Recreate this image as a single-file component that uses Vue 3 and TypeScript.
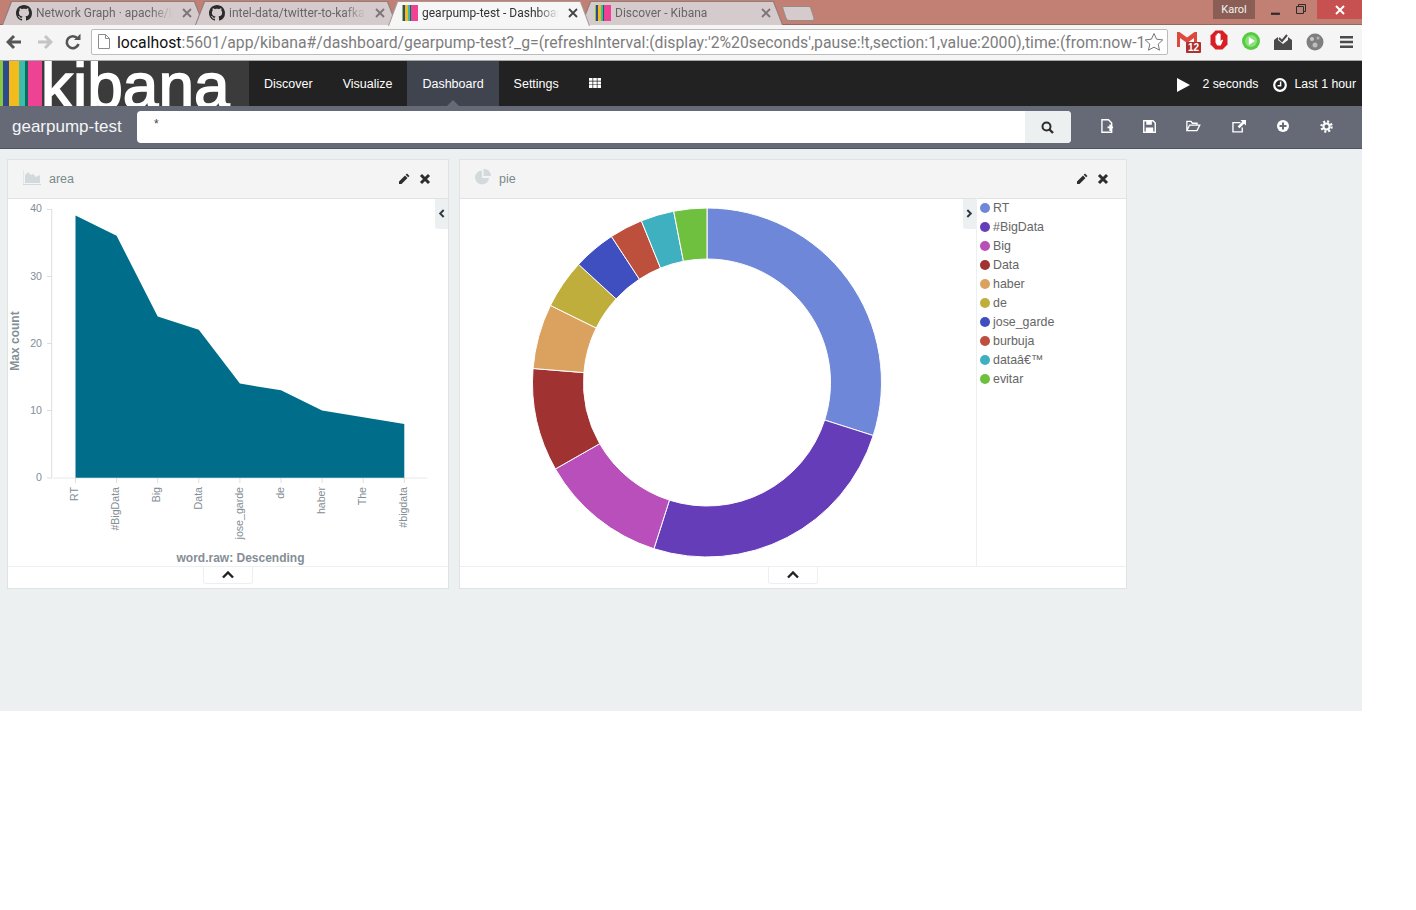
<script setup lang="ts">
interface Tab { title: string; icon: "github" | "kibana"; active?: boolean }
interface Slice { label: string; color: string; end: number }

const tabs: Tab[] = [
  { title: "Network Graph · apache/incubator", icon: "github" },
  { title: "intel-data/twitter-to-kafka", icon: "github" },
  { title: "gearpump-test - Dashboard", icon: "kibana", active: true },
  { title: "Discover - Kibana", icon: "kibana" },
];

const octocat =
  "M8 0C3.58 0 0 3.58 0 8c0 3.54 2.29 6.53 5.47 7.59.4.07.55-.17.55-.38 0-.19-.01-.82-.01-1.49-2.01.37-2.53-.49-2.69-.94-.09-.23-.48-.94-.82-1.13-.28-.15-.68-.52-.01-.53.63-.01 1.08.58 1.23.82.72 1.21 1.87.87 2.33.66.07-.52.28-.87.51-1.07-1.78-.2-3.64-.89-3.64-3.95 0-.87.31-1.59.82-2.15-.08-.2-.36-1.02.08-2.12 0 0 .67-.21 2.2.82.64-.18 1.32-.27 2-.27.68 0 1.36.09 2 .27 1.53-1.04 2.2-.82 2.2-.82.44 1.1.16 1.92.08 2.12.51.56.82 1.27.82 2.15 0 3.07-1.87 3.75-3.65 3.95.29.25.54.73.54 1.48 0 1.07-.01 1.93-.01 2.2 0 .21.15.46.55.38A8.013 8.013 0 0016 8c0-4.42-3.58-8-8-8z";

const navItems = [
  { label: "Discover" },
  { label: "Visualize" },
  { label: "Dashboard", active: true },
  { label: "Settings" },
];

// area chart, in page coordinates
const baseY = 477.7;
const unit = 6.72;
const yFor = (v: number) => baseY - v * unit;
const yTicks = [0, 10, 20, 30, 40];
const words = [
  { word: "RT", value: 39 },
  { word: "#BigData", value: 36 },
  { word: "Big", value: 24 },
  { word: "Data", value: 22 },
  { word: "jose_garde", value: 14 },
  { word: "de", value: 13 },
  { word: "haber", value: 10 },
  { word: "The", value: 9 },
  { word: "#bigdata", value: 8 },
];
const xFor = (i: number) => 75.5 + i * 41.1;
const areaPoints = [
  `${xFor(0)},${baseY}`,
  ...words.map((w, i) => `${xFor(i)},${yFor(w.value)}`),
  `${xFor(8)},${baseY}`,
].join(" ");

// donut, end angles in degrees clockwise from the top
const slices: Slice[] = [
  { label: "RT", color: "#6f87d8", end: 107.7 },
  { label: "#BigData", color: "#663db8", end: 197.7 },
  { label: "Big", color: "#b94fbb", end: 240.3 },
  { label: "Data", color: "#a13232", end: 274.6 },
  { label: "haber", color: "#dba25f", end: 296.2 },
  { label: "de", color: "#bfae3b", end: 312.6 },
  { label: "jose_garde", color: "#3f4fc0", end: 326.8 },
  { label: "burbuja", color: "#bd4f3d", end: 337.9 },
  { label: "dataâ€™", color: "#3fb0c0", end: 349 },
  { label: "evitar", color: "#70c040", end: 360 },
];

const cx = 707;
const cy = 382.5;
const polar = (r: number, deg: number) => {
  const a = (deg * Math.PI) / 180;
  return `${(cx + r * Math.sin(a)).toFixed(2)} ${(cy - r * Math.cos(a)).toFixed(2)}`;
};
const slicePath = (start: number, end: number) => {
  const large = end - start > 180 ? 1 : 0;
  return `M${polar(174.5, start)}A174.5 174.5 0 ${large} 1 ${polar(174.5, end)}L${polar(123.5, end)}A123.5 123.5 0 ${large} 0 ${polar(123.5, start)}Z`;
};
const arcs = slices.map((s, i) => ({
  color: s.color,
  d: slicePath(i === 0 ? 0 : slices[i - 1].end, s.end),
}));
</script>

<template>
  <div class="screen">
    <div class="tabstrip">
      <div v-for="tab in tabs" :key="tab.title" class="tab" :class="{ 'tab--active': tab.active }">
        <svg v-if="tab.icon === 'github'" class="favicon" viewBox="0 0 16 16"><path :d="octocat" fill="#2b2b2b" /></svg>
        <svg v-else class="favicon" viewBox="0 0 16 16">
          <rect x="0" width="1" height="16" fill="#8cc63f" />
          <rect x="1" width="2" height="16" fill="#2e4a8f" />
          <rect x="3" width="3" height="16" fill="#f4bb1c" />
          <rect x="6" width="2" height="16" fill="#3cbcab" />
          <rect x="8" width="1" height="16" fill="#0a6b5f" />
          <rect x="9" width="7" height="16" fill="#ee4394" />
        </svg>
        <span class="tab-title">{{ tab.title }}</span>
        <svg class="tab-close" viewBox="0 0 10 10"><path d="M1 1l8 8M9 1l-8 8" /></svg>
      </div>
      <div class="newtab"></div>
      <div class="window-user">Karol</div>
      <svg class="win-icon win-min" viewBox="0 0 9 9"><rect y="6" width="8" height="2" fill="#2c2c2c" /></svg>
      <svg class="win-icon win-max" viewBox="0 0 10 10"><path d="M2.5 2.5v-2h7v7h-2M.5 2.5h7v7h-7z" fill="none" stroke="#2c2c2c" /></svg>
      <div class="win-close">
        <svg viewBox="0 0 10 10" width="10" height="10"><path d="M1 1l8 8M9 1l-8 8" stroke="#fff" stroke-width="2" /></svg>
      </div>
    </div>

    <div class="toolbar">
      <svg class="tool" viewBox="0 0 18 18">
        <path d="M2 9h13M8 3L2 9l6 6" fill="none" stroke="#555" stroke-width="3" />
      </svg>
      <svg class="tool" viewBox="0 0 18 18">
        <path d="M16 9H3M10 3l6 6-6 6" fill="none" stroke="#c4c4c4" stroke-width="3" />
      </svg>
      <svg class="tool" viewBox="0 0 18 18">
        <path d="M14.5 11a6 6 0 1 1-1-5.5" fill="none" stroke="#555" stroke-width="2.6" />
        <path d="M10 7h6.5V.8z" fill="#555" />
      </svg>
      <div class="omnibox">
        <svg class="doc-icon" viewBox="0 0 12 15">
          <path d="M.5.5h7l4 4v10H.5z" fill="#fff" stroke="#8c8c8c" />
          <path d="M7.5.5v4h4" fill="none" stroke="#8c8c8c" />
        </svg>
        <div class="url"><span class="url-host">localhost</span>:5601/app/kibana#/dashboard/gearpump-test?_g=(refreshInterval:(display:'2%20seconds',pause:!t,section:1,value:2000),time:(from:now-1h,mode:quick,to:now))</div>
        <svg class="star" viewBox="0 0 20 20">
          <path d="M10 1.5l2.6 5.7 6.2.7-4.6 4.2 1.3 6.1L10 15.1l-5.5 3.1 1.3-6.1L1.2 7.9l6.2-.7z" fill="#fff" stroke="#777" />
        </svg>
      </div>
      <div class="extensions">
        <div class="gmail">
          <svg viewBox="0 0 20 16" width="20" height="16">
            <path d="M0 0h2.500L10 5.500 17.500 0H20v15H17V6l-7 5L3 6v9H0z" fill="#dc4a3e" />
          </svg>
          <span class="gmail-count">12</span>
        </div>
        <svg class="ext ext-adblock" viewBox="0 0 18 20">
          <path d="M5.500 .5h7L17.500 5.500v9l-5 5h-7l-5-5v-9z" fill="#d81f26" />
          <path d="M5.500 9V5.500h1.200V9 3.800h1.300V9 3h1.300v6V3.800h1.300V11l1.600-1.500.9.700L10.800 15.500H7.200L5.500 12.500z" fill="#fff" />
        </svg>
        <svg class="ext ext-play" viewBox="0 0 18 18">
          <circle cx="9" cy="9" r="9" fill="#56cb3f" />
          <circle cx="9" cy="9" r="6" fill="#8be07a" />
          <path d="M6.800 5l6.200 4-6.200 4z" fill="#fff" />
        </svg>
        <svg class="ext ext-mail" viewBox="0 0 18 16">
          <path d="M0 6l4-3v3l5 4 5-4V3l4 3v10H0z" fill="#4a4a4a" />
          <path d="M5 4l3 3 5-6" fill="none" stroke="#4a4a4a" stroke-width="2" />
        </svg>
        <svg class="ext ext-globe" viewBox="0 0 18 18">
          <circle cx="9" cy="9" r="8.500" fill="#7f7f7f" />
          <circle cx="6" cy="6" r="2" fill="#c9c9c9" />
          <circle cx="12" cy="5" r="1.500" fill="#b5b5b5" />
          <circle cx="9" cy="12" r="2.500" fill="#bdbdbd" />
        </svg>
        <svg class="ext ext-menu" viewBox="0 0 13 12">
          <path d="M0 0h13v2.500H0zM0 4.700h13v2.500H0zM0 9.500h13V12H0z" fill="#4a4a4a" />
        </svg>
      </div>
    </div>

    <nav class="topnav">
      <div class="logo">
        <div class="logo-stripes">
          <span class="stripe s1"></span><span class="stripe s2"></span><span class="stripe s3"></span>
          <span class="stripe s4"></span><span class="stripe s5"></span><span class="stripe s6"></span>
        </div>
        <span class="logo-text">kibana</span>
      </div>
      <a v-for="item in navItems" :key="item.label" class="nav-link" :class="{ 'nav-link--active': item.active }">{{ item.label }}</a>
      <svg class="grid-icon" viewBox="0 0 12 10">
        <path d="M0 0h3.500v2.800H0zM4.200 0h3.600v2.800H4.200zM8.500 0H12v2.800H8.500zM0 3.500h3.500v2.900H0zM4.200 3.500h3.600v2.900H4.200zM8.500 3.500H12v2.900H8.500zM0 7.100h3.500V10H0zM4.200 7.100h3.600V10H4.200zM8.500 7.100H12V10H8.500z" fill="#fff" />
      </svg>
      <div class="nav-right">
        <svg class="play-icon" viewBox="0 0 13 14"><path d="M0 0l13 7-13 7z" fill="#fff" /></svg>
        <span class="nav-text">2 seconds</span>
        <svg class="clock-icon" viewBox="0 0 14 14">
          <circle cx="7" cy="7" r="5.800" fill="none" stroke="#fff" stroke-width="2.200" />
          <path d="M7.600 3.500v4.200H4.500" fill="none" stroke="#fff" stroke-width="1.500" />
        </svg>
        <span class="nav-text">Last 1 hour</span>
      </div>
    </nav>

    <div class="subnav">
      <div class="dash-name">gearpump-test</div>
      <div class="query">
        <div class="query-input">*</div>
        <div class="query-btn">
          <svg viewBox="0 0 13 13" width="13" height="13">
            <circle cx="5.500" cy="5.500" r="4" fill="none" stroke="#2d2d2d" stroke-width="2" />
            <path d="M8.500 8.500l3.500 3.500" stroke="#2d2d2d" stroke-width="2.400" />
          </svg>
        </div>
      </div>
      <div class="sub-actions">
        <span class="sub-action">
          <svg viewBox="0 0 14 15" width="13" height="14">
            <path d="M1 .8h7l3.500 3.500v9.900H1z" fill="none" stroke="#fff" stroke-width="1.500" />
            <path d="M7 8h2V6h2v2h2v2h-2v3H9v-3H7z" fill="#fff" />
          </svg>
        </span>
        <span class="sub-action">
          <svg viewBox="0 0 14 14" width="13" height="13">
            <path d="M.8.800h10l2.400 2.400v10H.8z" fill="none" stroke="#fff" stroke-width="1.500" />
            <path d="M3.500 1h6v4h-6zM3 8h8v5H3z" fill="#fff" />
          </svg>
        </span>
        <span class="sub-action">
          <svg viewBox="0 0 16 13" width="15" height="12">
            <path d="M.8 11.500V1.500h4.500l1.500 2h5v2.300M.8 11.500l3-6h11l-3 6z" fill="none" stroke="#fff" stroke-width="1.400" />
          </svg>
        </span>
        <span class="sub-action">
          <svg viewBox="0 0 15 14" width="14" height="13">
            <path d="M9 2.800H1v10h10V8" fill="none" stroke="#fff" stroke-width="1.500" />
            <path d="M9 0h6v6l-2-2-5 5-2-2 5-5z" fill="#fff" />
          </svg>
        </span>
        <span class="sub-action">
          <svg viewBox="0 0 12 12" width="12" height="12">
            <circle cx="6" cy="6" r="6" fill="#fff" />
            <path d="M5 2.500h2V5h2.500v2H7v2.500H5V7H2.500V5H5z" fill="#656a76" />
          </svg>
        </span>
        <span class="sub-action">
          <svg viewBox="0 0 14 14" width="13" height="13">
            <circle cx="7" cy="7" r="5.500" fill="none" stroke="#fff" stroke-width="2.400" stroke-dasharray="2.200 2.120" />
            <circle cx="7" cy="7" r="3.300" fill="none" stroke="#fff" stroke-width="2.200" />
          </svg>
        </span>
      </div>
    </div>

    <main class="dashboard">
      <section class="panel panel--area">
        <header class="panel-head">
          <svg class="panel-icon" viewBox="0 0 18 15">
            <path d="M0 0v14.500h18" fill="none" stroke="#d3dadb" />
            <path d="M2 13V5l3-3 3 3 2-1 3 3 4-2v8z" fill="#d3dadb" />
          </svg>
          <span class="panel-title">area</span>
          <svg class="head-action" viewBox="0 0 12 12"><path d="M9 .5L11.500 3 10.200 4.300 7.700 1.800zM7 2.500L9.500 5 3.500 11H1V8.500z" fill="#2d2d2d" /></svg>
          <svg class="head-action" viewBox="0 0 12 12"><path d="M2 2l8 8M10 2l-8 8" stroke="#2d2d2d" stroke-width="3" /></svg>
        </header>
        <div class="panel-body">
          <svg class="area-chart" viewBox="8 199 440 367" width="440" height="367">
            <path d="M51.700 209.500V478M47 209.500h5M47 276.500h5M47 343.500h5M47 410.500h5M47 478h5" fill="none" stroke="#dedede" />
            <path d="M53 478h374" stroke="#e8e8e8" />
            <polygon :points="areaPoints" fill="#006e8a" />
            <path v-for="(w, i) in words" :key="w.word" :d="`M${xFor(i)} 478v5`" stroke="#dedede" />
            <text v-for="t in yTicks" :key="t" class="tick" x="42" :y="yFor(t) + 3.500" text-anchor="end">{{ t }}</text>
            <text
              v-for="(w, i) in words"
              :key="w.word"
              class="tick"
              text-anchor="end"
              :transform="`translate(${xFor(i) + 2.700} 487) rotate(-90)`"
            >{{ w.word }}</text>
            <text class="axis-title" text-anchor="middle" transform="translate(19 341) rotate(-90)">Max count</text>
            <text class="axis-title" x="240.500" y="562" text-anchor="middle">word.raw: Descending</text>
          </svg>
          <div class="legend-toggle legend-toggle--area">
            <svg viewBox="0 0 8 10" width="7" height="9"><path d="M6.500 1L2.500 5l4 4" fill="none" stroke="#2d3a45" stroke-width="2.200" /></svg>
          </div>
        </div>
        <footer class="panel-foot">
          <div class="spy-toggle"><svg viewBox="0 0 12 8" width="12" height="8"><path d="M1 6.500l5-5 5 5" fill="none" stroke="#222" stroke-width="2.400" /></svg></div>
        </footer>
      </section>

      <section class="panel panel--pie">
        <header class="panel-head">
          <svg class="panel-icon panel-icon--pie" viewBox="0 0 16 16">
            <path d="M7 1.500A7 7 0 1 0 14 9H7z" fill="#d3dadb" />
            <path d="M8.500 0A7 7 0 0 1 16 7H8.500z" fill="#d3dadb" />
          </svg>
          <span class="panel-title">pie</span>
          <svg class="head-action" viewBox="0 0 12 12"><path d="M9 .5L11.500 3 10.200 4.300 7.700 1.800zM7 2.500L9.500 5 3.500 11H1V8.500z" fill="#2d2d2d" /></svg>
          <svg class="head-action" viewBox="0 0 12 12"><path d="M2 2l8 8M10 2l-8 8" stroke="#2d2d2d" stroke-width="3" /></svg>
        </header>
        <div class="panel-body">
          <svg class="pie-chart" viewBox="460 199 516 367" width="516" height="367">
            <path v-for="arc in arcs" :key="arc.color" :d="arc.d" :fill="arc.color" stroke="#fff" stroke-width="1" />
          </svg>
          <div class="legend-toggle legend-toggle--pie">
            <svg viewBox="0 0 8 10" width="7" height="9"><path d="M1.500 1l4 4-4 4" fill="none" stroke="#2d3a45" stroke-width="2.200" /></svg>
          </div>
          <ul class="legend">
            <li v-for="s in slices" :key="s.label" class="legend-item">
              <span class="legend-dot" :style="{ background: s.color }"></span>{{ s.label }}
            </li>
          </ul>
        </div>
        <footer class="panel-foot">
          <div class="spy-toggle"><svg viewBox="0 0 12 8" width="12" height="8"><path d="M1 6.500l5-5 5 5" fill="none" stroke="#222" stroke-width="2.400" /></svg></div>
        </footer>
      </section>
    </main>
  </div>
</template>

<style scoped>
.screen {
  width: 1362px;
  font-family: "Liberation Sans", Arial, sans-serif;
}

/* browser chrome */
.tabstrip {
  height: 25px;
  display: flex;
  background: #c27f73;
  box-shadow: inset 0 -1px 0 #8e6a62;
  padding-left: 2px;
  font-family: Roboto, "Noto Sans", sans-serif;
}

.tab {
  position: relative;
  width: 202px;
  height: 24px;
  margin: 1px -9px 0 0;
  padding: 0 12px 0 14px;
  box-sizing: border-box;
  display: flex;
  align-items: center;
  background: #8f7e7b;
  clip-path: polygon(0 100%, 9px 0, calc(100% - 9px) 0, 100% 100%);
}

.tab::before {
  content: "";
  position: absolute;
  inset: 1px 1px 0 1px;
  background: #d5cbcc;
  clip-path: polygon(0 100%, 9px 0, calc(100% - 9px) 0, 100% 100%);
}

.tab > * {
  position: relative;
}

.tab--active {
  z-index: 1;
  height: 25px;
  padding-bottom: 1px;
  background: #a59a98;
}

.tab--active::before {
  background: #f6f6f6;
}

.favicon {
  width: 16px;
  height: 16px;
  flex: none;
}

.tab-title {
  margin-left: 4px;
  width: 144px;
  flex: none;
  overflow: hidden;
  white-space: nowrap;
  font-size: 12px;
  color: #666;
  -webkit-mask-image: linear-gradient(to right, #000 115px, transparent 137px);
  mask-image: linear-gradient(to right, #000 115px, transparent 137px);
}

.tab--active .tab-title {
  color: #333;
}

.tab-close {
  width: 10px;
  height: 10px;
  margin-left: 2px;
  flex: none;
  stroke: #7b7577;
  stroke-width: 1.8;
  fill: none;
}

.tab--active .tab-close {
  stroke: #444;
}

.newtab {
  width: 27px;
  height: 13px;
  margin: 6px 0 0 10px;
  background: #d5cbcc;
  border: 1px solid #9a8a87;
  border-radius: 2px 2px 3px 3px;
  transform: skewX(18deg);
}

.window-user {
  margin-left: 400px;
  width: 43px;
  height: 19px;
  background: #8b5e55;
  color: #f2f2f2;
  font-size: 11px;
  line-height: 19px;
  text-align: center;
}

.win-icon {
  width: 10px;
  height: 10px;
  flex: none;
}

.win-min {
  margin: 6px 0 0 16px;
}

.win-max {
  margin: 4px 0 0 15px;
}

.win-close {
  margin-left: 11px;
  width: 45px;
  height: 19px;
  background: #c75050;
  display: flex;
  align-items: center;
  justify-content: center;
}

.toolbar {
  height: 36px;
  box-sizing: border-box;
  display: flex;
  align-items: center;
  gap: 11px;
  padding: 0 0 2px 6px;
  background: #f5f5f5;
  border-bottom: 1px solid #a8a8a8;
}

.tool {
  width: 18px;
  height: 18px;
  flex: none;
}

.omnibox {
  width: 1077px;
  height: 26px;
  margin-left: -2px;
  box-sizing: border-box;
  flex: none;
  display: flex;
  align-items: center;
  background: #fff;
  border: 1px solid #bcbcbc;
  border-radius: 2px;
  padding: 0 3px 0 6px;
}

.doc-icon {
  width: 12px;
  height: 15px;
  flex: none;
}

.url {
  margin: 0 1px 0 7px;
  padding-top: 2px;
  flex: 1;
  min-width: 0;
  overflow: hidden;
  white-space: nowrap;
  font-family: Roboto, "Noto Sans", sans-serif;
  font-size: 15.77px;
  color: #7d7d7d;
}

.url-host {
  color: #111;
}

.star {
  width: 20px;
  height: 20px;
  flex: none;
}

.extensions {
  display: flex;
  align-items: center;
  margin-left: -3px;
}

.gmail {
  position: relative;
  width: 24px;
  height: 22px;
  margin-left: 1px;
  padding-top: 1px;
  box-sizing: border-box;
}

.gmail-count {
  position: absolute;
  right: 0;
  bottom: 0;
  padding: 0 2px;
  background: #b03030;
  border-radius: 1px;
  color: #fff;
  font-size: 10px;
  font-weight: 700;
  line-height: 11px;
}

.ext {
  flex: none;
}

.ext-adblock {
  width: 18px;
  height: 20px;
  margin: 0 0 3px 9px;
}

.ext-play {
  width: 18px;
  height: 18px;
  margin: 0 0 2px 14px;
}

.ext-mail {
  width: 18px;
  height: 16px;
  margin-left: 14px;
}

.ext-globe {
  width: 18px;
  height: 18px;
  margin-left: 14px;
}

.ext-menu {
  width: 13px;
  height: 12px;
  margin-left: 16px;
}

/* kibana nav */
.topnav {
  position: relative;
  height: 45px;
  display: flex;
  align-items: center;
  background: #222;
  color: #fff;
}

.logo {
  width: 249px;
  height: 45px;
  flex: none;
  display: flex;
  background: #3b3b3b;
  overflow: hidden;
}

.logo-stripes {
  display: flex;
  flex: none;
  width: 42px;
}

.stripe {
  height: 100%;
}

.s1 { width: 3px; background: #8cc63f; }
.s2 { width: 6px; background: #2e4a8f; }
.s3 { width: 10px; background: #f4bb1c; }
.s4 { width: 6px; background: #3cbcab; }
.s5 { width: 3px; background: #0a6b5f; }
.s6 { width: 14px; background: #ee4394; }

.logo-text {
  margin-left: -1px;
  font-size: 64px;
  line-height: 45px;
  -webkit-text-stroke: 1.6px #fff;
  color: #fff;
  transform: translateY(3px);
}

.nav-link {
  position: relative;
  height: 45px;
  padding: 0 15px;
  display: flex;
  align-items: center;
  font-size: 12.5px;
  color: #fff;
}

.nav-link--active {
  background: #3f444f;
}

.nav-link--active::after {
  content: "";
  position: absolute;
  left: 50%;
  bottom: 0;
  margin-left: -6px;
  border: 6px solid transparent;
  border-top: 0;
  border-bottom-color: #656a76;
}

.grid-icon {
  width: 12px;
  height: 10px;
  margin-left: 15px;
  margin-top: -1px;
  flex: none;
}

.nav-right {
  margin-left: auto;
  padding-right: 6px;
  display: flex;
  align-items: center;
}

.nav-text {
  font-size: 12.3px;
}

.play-icon {
  width: 13px;
  height: 14px;
  margin: 3px 12px 0 0;
}

.clock-icon {
  width: 14px;
  height: 14px;
  margin: 2px 7px 0 15px;
}

.subnav {
  height: 43px;
  box-sizing: border-box;
  display: flex;
  align-items: flex-start;
  padding: 5px 0 0 12px;
  background: #656a76;
  border-bottom: 1px solid #4e525c;
}

.dash-name {
  width: 125px;
  flex: none;
  font-size: 17px;
  line-height: 31px;
  color: #f4f5f6;
}

.query {
  width: 934px;
  height: 32px;
  flex: none;
  display: flex;
  border-radius: 4px;
  overflow: hidden;
  background: #fff;
}

.query-input {
  flex: 1;
  padding: 6px 0 0 17px;
  font-size: 12px;
  color: #444;
}

.query-btn {
  width: 46px;
  padding-right: 2px;
  box-sizing: border-box;
  background: #ecf0f1;
  display: flex;
  align-items: center;
  justify-content: center;
}

.sub-actions {
  display: flex;
  margin-left: 15px;
}

.sub-action {
  width: 43.8px;
  height: 30px;
  display: flex;
  align-items: center;
  justify-content: center;
}

.sub-action:nth-child(2) {
  margin-left: -2px;
}

.sub-action:nth-child(4) {
  margin-left: 2px;
}

/* dashboard */
.dashboard {
  height: 562px;
  box-sizing: border-box;
  display: flex;
  align-items: flex-start;
  gap: 10px;
  padding: 10px 0 0 7px;
  background: #ecf0f1;
}

.panel {
  height: 430px;
  box-sizing: border-box;
  display: flex;
  flex-direction: column;
  background: #fff;
  border: 1px solid #dfe3e4;
}

.panel--area {
  width: 442px;
}

.panel--pie {
  width: 668px;
}

.panel-head {
  height: 39px;
  box-sizing: border-box;
  flex: none;
  display: flex;
  align-items: center;
  padding: 0 17px 0 15px;
  background: #f4f4f4;
  border-bottom: 1px solid #e0e3e4;
}

.panel-icon {
  width: 18px;
  height: 15px;
  flex: none;
  margin-top: -4px;
}

.panel-icon--pie {
  width: 16px;
  height: 16px;
}

.panel-title {
  margin-left: 8px;
  flex: 1;
  font-size: 12.5px;
  color: #7b8a8b;
}

.head-action {
  width: 12px;
  height: 12px;
  margin-left: 9px;
  flex: none;
}

.panel-body {
  position: relative;
  height: 367px;
  flex: none;
  display: flex;
}

.area-chart,
.pie-chart {
  display: block;
  flex: none;
}

.tick {
  font-size: 10.6px;
  fill: #848e96;
}

.axis-title {
  font-size: 12px;
  font-weight: 700;
  fill: #848e96;
}

.legend-toggle {
  position: absolute;
  top: 0;
  width: 13px;
  height: 30px;
  background: #ecf0f1;
  display: flex;
  align-items: center;
  justify-content: center;
  padding-bottom: 2px;
  box-sizing: border-box;
  border-radius: 0 0 0 3px;
}

.legend-toggle--area {
  right: 0;
}

.legend-toggle--pie {
  left: 503px;
}

.legend {
  margin: -1px 0 0;
  padding: 0 0 0 3px;
  list-style: none;
  flex: 1;
  border-left: 1px solid #ecf0f1;
}

.legend-item {
  height: 19px;
  display: flex;
  align-items: center;
  font-size: 12.4px;
  color: #666;
  white-space: nowrap;
}

.legend-dot {
  width: 10px;
  height: 10px;
  border-radius: 50%;
  margin-right: 3px;
  flex: none;
}

.panel-foot {
  flex: 1;
  border-top: 1px solid #ecf0f1;
  display: flex;
  justify-content: center;
}

.spy-toggle {
  width: 50px;
  height: 17px;
  box-sizing: border-box;
  display: flex;
  align-items: center;
  justify-content: center;
  border: 1px solid #ecf0f1;
  border-top: 0;
  border-radius: 0 0 3px 3px;
}
</style>

<style>
html,
body {
  background: #fff;
}
</style>
